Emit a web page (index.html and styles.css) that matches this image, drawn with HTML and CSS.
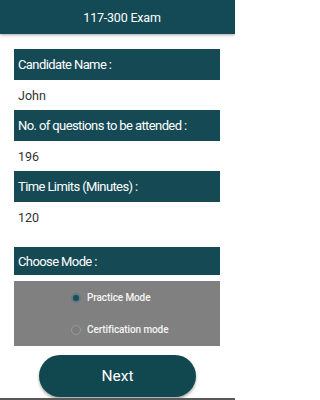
FILE: index.html
```html
<!DOCTYPE html>
<html>
<head>
<meta charset="utf-8">
<link rel="stylesheet" href="styles.css">
</head>
<body>
<div class="app">
  <header class="topbar">117-300 Exam</header>
  <main class="content">
    <div class="label">Candidate Name :</div>
    <div class="value">John</div>
    <div class="label">No. of questions to be attended :</div>
    <div class="value">196</div>
    <div class="label">Time Limits (Minutes) :</div>
    <div class="value">120</div>
    <div class="label label-mode">Choose Mode :</div>
    <div class="modes">
      <div class="mode"><span class="radio checked"></span><span>Practice Mode</span></div>
      <div class="mode"><span class="radio"></span><span>Certification mode</span></div>
    </div>
    <div class="actions"><button class="next">Next</button></div>
  </main>
  <div class="bottomline"></div>
</div>
</body>
</html>
```
FILE: styles.css
```css
html, body {
  margin: 0;
  padding: 0;
  background: #ffffff;
}
body {
  font-family: Roboto, "Liberation Sans", sans-serif;
  width: 235px;
  height: 400px;
  overflow: hidden;
}
.app {
  display: flex;
  flex-direction: column;
  height: 400px;
}
.topbar {
  height: 34px;
  background: #134a55;
  color: #ffffff;
  font-size: 12.5px;
  letter-spacing: -0.2px;
  display: flex;
  align-items: center;
  justify-content: center;
  padding-top: 1px;
  padding-left: 9px;
  box-sizing: border-box;
  box-shadow: 0 1px 3px rgba(0,0,0,0.35);
  position: relative;
  z-index: 1;
}
.content {
  flex: 1;
  display: flex;
  flex-direction: column;
  padding: 15px 15px 0 14px;
}
.label {
  height: 31px;
  background: #154a55;
  color: #ffffff;
  font-size: 13px;
  letter-spacing: -0.6px;
  display: flex;
  align-items: center;
  padding-left: 4px;
}
.value {
  height: 30px;
  color: #333333;
  font-size: 12.5px;
  display: flex;
  align-items: center;
  padding-left: 4px;
}
.label-mode {
  margin-top: 15px;
  height: 28px;
}
.modes {
  margin-top: 6px;
  height: 65px;
  background: #808080;
  display: flex;
  flex-direction: column;
  align-items: flex-start;
  justify-content: center;
  gap: 20px;
  padding-left: 57px;
}
.mode {
  display: flex;
  align-items: center;
  gap: 6px;
  height: 12px;
  color: #f5f5f5;
  font-size: 10px;
  font-weight: 500;
  letter-spacing: -0.1px;
}
.radio {
  width: 10px;
  height: 10px;
  border-radius: 50%;
  border: 1px solid #9a9a9a;
  background: #7d7d7d;
  box-sizing: border-box;
  flex: none;
}
.radio.checked {
  border: 2px solid #5c7d86;
  background: #1d4b57;
}
.actions {
  display: flex;
  justify-content: center;
  margin-top: 9px;
}
.next {
  width: 157px;
  height: 42px;
  border: none;
  border-radius: 21px;
  background: #11474f;
  color: #ffffff;
  font-family: Roboto, "Liberation Sans", sans-serif;
  font-size: 15.5px;
  box-shadow: 0 2px 3px rgba(0,0,0,0.35);
  margin-left: 1px;
}
.bottomline {
  height: 2px;
  background: #5a5a5a;
}
```
